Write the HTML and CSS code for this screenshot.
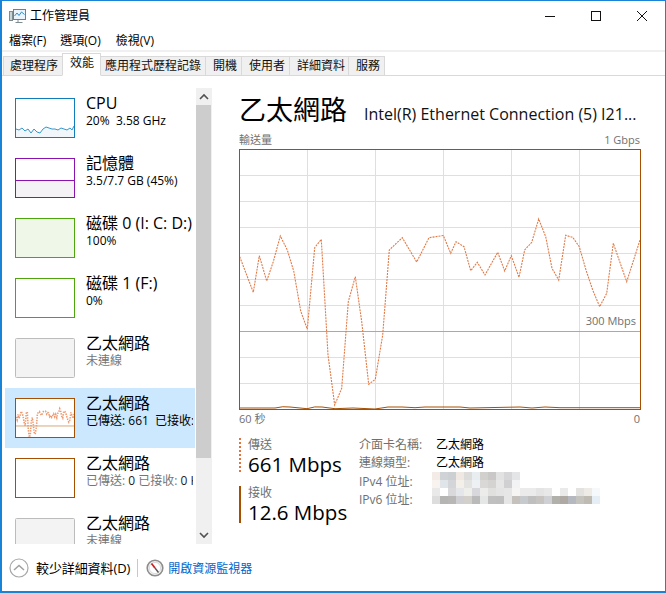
FILE: index.html
```html
<!DOCTYPE html>
<html lang="zh-Hant">
<head>
<meta charset="utf-8">
<title>工作管理員</title>
<link rel="stylesheet" href="styles.css">
</head>
<body>
<div class="window">
  <header class="titlebar">
    <svg class="app-icon" width="17" height="16" viewBox="0 0 17 16">
      <rect x="0.5" y="3.5" width="3" height="9" fill="#c9d3d6" stroke="#7d8c90"/>
      <rect x="4.5" y="1.5" width="12" height="10" fill="#eaf4fa" stroke="#6f8087"/>
      <path d="M5.5 8 L8 5 L10 7.5 L12.5 4 L15.5 6.5" fill="none" stroke="#2b8fc9"/>
      <path d="M9 12 V14 M6.5 14.5 H13.5" stroke="#7d8c90" fill="none"/>
    </svg>
    <span class="app-title">工作管理員</span>
    <div class="win-controls">
      <svg width="46" height="30" viewBox="0 0 46 30"><path d="M18 15.5 H28" stroke="#111"/></svg>
      <svg width="46" height="30" viewBox="0 0 46 30"><rect x="18.5" y="10.5" width="9" height="9" fill="none" stroke="#111"/></svg>
      <svg width="46" height="30" viewBox="0 0 46 30"><path d="M18 10 L28 20 M28 10 L18 20" stroke="#111" fill="none"/></svg>
    </div>
  </header>
  <nav class="menubar">
    <span>檔案(F)</span><span>選項(O)</span><span class="menu-view">檢視(V)</span>
  </nav>
  <div class="tabs">
    <span class="tab tab-first">處理程序</span>
    <span class="tab tab-active">效能</span>
    <span class="tab tab-tight">應用程式歷程記錄</span>
    <span class="tab">開機</span>
    <span class="tab">使用者</span>
    <span class="tab tab-details">詳細資料</span>
    <span class="tab">服務</span>
  </div>
  <main class="content">
    <aside class="side">
      <div class="list">
        <div class="item">
          <svg class="thumb" width="60" height="40" viewBox="0 0 60 40">
            <path class="cpu-fill" d="M1 31 L4 32 L7 30 L10 33 L13 31 L16 35 L19 31 L22 34 L25 35 L28 31 L31 29 L34 30 L37 31 L40 31 L43 32 L46 30 L49 31 L52 32 L55 30 L57 32 L59 28 V39 H1 Z"/>
            <path class="cpu-line" d="M1 31 L4 32 L7 30 L10 33 L13 31 L16 35 L19 31 L22 34 L25 35 L28 31 L31 29 L34 30 L37 31 L40 31 L43 32 L46 30 L49 31 L52 32 L55 30 L57 32 L59 28"/>
            <rect class="frame frame-cpu" x="0.5" y="0.5" width="59" height="39"/>
          </svg>
          <div class="item-text"><div class="item-title">CPU</div><div class="item-sub">20%&nbsp; 3.58 GHz</div></div>
        </div>
        <div class="item">
          <svg class="thumb" width="60" height="40" viewBox="0 0 60 40">
            <rect class="mem-fill" x="0" y="22" width="60" height="18"/>
            <path class="mem-line" d="M0 22.5 H60"/>
            <rect class="frame frame-mem" x="0.5" y="0.5" width="59" height="39"/>
          </svg>
          <div class="item-text"><div class="item-title">記憶體</div><div class="item-sub">3.5/7.7 GB (45%)</div></div>
        </div>
        <div class="item">
          <svg class="thumb" width="60" height="40" viewBox="0 0 60 40">
            <rect class="disk-fill" width="60" height="40"/>
            <rect class="frame frame-disk" x="0.5" y="0.5" width="59" height="39"/>
          </svg>
          <div class="item-text"><div class="item-title">磁碟 0 (I: C: D:)</div><div class="item-sub">100%</div></div>
        </div>
        <div class="item">
          <svg class="thumb" width="60" height="40" viewBox="0 0 60 40">
            <rect class="frame frame-disk" x="0.5" y="0.5" width="59" height="39"/>
          </svg>
          <div class="item-text"><div class="item-title">磁碟 1 (F:)</div><div class="item-sub">0%</div></div>
        </div>
        <div class="item">
          <svg class="thumb" width="60" height="40" viewBox="0 0 60 40">
            <rect class="frame frame-off" x="0.5" y="0.5" width="59" height="39" rx="1"/>
          </svg>
          <div class="item-text"><div class="item-title">乙太網路</div><div class="item-sub sub-muted">未連線</div></div>
        </div>
        <div class="item item-selected">
          <svg class="thumb" width="60" height="40" viewBox="239 149 402 261" preserveAspectRatio="none">
            <rect x="239" y="149" width="402" height="261" fill="#fff"/>
            <path class="thumb-mid" d="M239 331.5 H641"/>
            <use href="#series" class="thumb-series"/>
            <rect class="frame-eth-scaled" x="239" y="149" width="402" height="261"/>
          </svg>
          <div class="item-text"><div class="item-title">乙太網路</div><div class="item-sub">已傳送: 661&nbsp; 已接收: 12.6 Mbps</div></div>
        </div>
        <div class="item">
          <svg class="thumb" width="60" height="40" viewBox="0 0 60 40">
            <rect class="frame frame-eth" x="0.5" y="0.5" width="59" height="39"/>
          </svg>
          <div class="item-text"><div class="item-title">乙太網路</div><div class="item-sub sub-muted">已傳送: <b class="val">0</b> 已接收: <b class="val">0 Kbps</b></div></div>
        </div>
        <div class="item">
          <svg class="thumb" width="60" height="40" viewBox="0 0 60 40">
            <rect class="frame frame-off" x="0.5" y="0.5" width="59" height="39" rx="1"/>
          </svg>
          <div class="item-text"><div class="item-title">乙太網路</div><div class="item-sub sub-muted">未連線</div></div>
        </div>
      </div>
      <div class="scrollbar">
        <svg class="sb-btn" width="16" height="17" viewBox="0 0 16 17"><path d="M4 11 L8 7 L12 11" fill="none" stroke="#505050" stroke-width="1.6"/></svg>
        <div class="sb-thumb"></div>
        <div class="sb-rest"></div>
        <svg class="sb-btn" width="16" height="17" viewBox="0 0 16 17"><path d="M4 6 L8 10 L12 6" fill="none" stroke="#505050" stroke-width="1.6"/></svg>
      </div>
    </aside>
    <section class="main">
      <div class="heading">
        <h1 class="h-title">乙太網路</h1>
        <div class="h-sub">Intel(R) Ethernet Connection (5) I21...</div>
      </div>
      <div class="axis axis-top"><span>輸送量</span><span>1 Gbps</span></div>
      <div class="chart">
        <svg width="402" height="261" viewBox="239 149 402 261">
          <path class="grid" d="M239 175.5H640M239 201.5H640M239 227.5H640M239 253.5H640M239 279.5H640M239 305.5H640M239 357.5H640M239 383.5H640M307.5 149V409M375.5 149V409M443.5 149V409M511.5 149V409M579.5 149V409"/>
          <path class="midline" d="M239 331.5H640"/>
          <path id="series" class="series" d="M239.7 256.7 L253.3 292.3 L259.3 255.7 L266.7 281 L273.3 261.7 L280.3 236 L287.3 250 L293.7 271 L300.7 311 L307.3 329.3 L314.7 247.7 L321.3 239.3 L328 355 L334.7 405 L341.7 388.3 L348.3 301.7 L355.3 276.7 L361.7 321.7 L368.7 384.3 L375.3 379.3 L382.7 335 L389.3 250 L402.3 237.7 L416.7 262 L429 237.7 L443.3 235.5 L450.7 253.3 L456 241.7 L464 246.7 L470.7 270.7 L477.3 262.3 L485 275 L497.7 252.3 L504.7 271 L511.3 255.7 L519 277.3 L524.7 250 L531.7 242.3 L538.7 219 L545.7 236.7 L552 268.3 L558.7 280 L565.7 235.3 L572.7 237.3 L579.3 246.7 L586 270 L592.7 290 L599.7 306.7 L606.7 293.3 L613.3 243.3 L626.7 281.7 L640 240"/>
          <path class="recv" d="M240 408 H275 Q283 406 290 407 L307 408.7 Q315 406 322 407 L335 408.7 L353 408 L375 409 L388 407 H402 L415 407.7 L425 407 H460 L470 408 L520 407 L532 408 L545 407 L560 407.7 H640"/>
          <rect class="chart-frame" x="239.5" y="149.5" width="401" height="260"/>
        </svg>
        <span class="scale-label">300 Mbps</span>
      </div>
      <div class="axis axis-bottom"><span>60 秒</span><span>0</span></div>
      <div class="stats">
        <div class="rates">
          <div class="rate rate-send">
            <div class="rate-label">傳送</div>
            <div class="rate-value">661 Mbps</div>
          </div>
          <div class="rate rate-recv">
            <div class="rate-label">接收</div>
            <div class="rate-value">12.6 Mbps</div>
          </div>
        </div>
        <dl class="details">
          <dt>介面卡名稱:</dt><dd>乙太網路</dd>
          <dt>連線類型:</dt><dd>乙太網路</dd>
          <dt>IPv4 位址:</dt>
          <dd class="blur-cell">
            <svg width="168" height="32" viewBox="0 0 21 4" shape-rendering="crispEdges">
              <g>
                <rect x="0" y="0" width="1" height="1" fill="#f3ece6"/><rect x="1" y="0" width="1" height="1" fill="#cfd3d6"/><rect x="2" y="0" width="1" height="1" fill="#cdd0d3"/><rect x="3" y="0" width="1" height="1" fill="#f0e9e3"/><rect x="4" y="0" width="1" height="1" fill="#dcdcda"/><rect x="5" y="0" width="1" height="1" fill="#e8edf0"/><rect x="6" y="0" width="1" height="1" fill="#d2d0cd"/><rect x="7" y="0" width="1" height="1" fill="#c9c8c6"/><rect x="8" y="0" width="1" height="1" fill="#e2e2e2"/><rect x="9" y="0" width="1" height="1" fill="#d6d6d8"/><rect x="10" y="0" width="1" height="1" fill="#e4e5e7"/>
                <rect x="0" y="1" width="1" height="1" fill="#f8f3ee"/><rect x="1" y="1" width="1" height="1" fill="#e0e5e9"/><rect x="2" y="1" width="1" height="1" fill="#d3d5d8"/><rect x="3" y="1" width="1" height="1" fill="#f3efe9"/><rect x="4" y="1" width="1" height="1" fill="#e3e3e1"/><rect x="5" y="1" width="1" height="1" fill="#edf1f4"/><rect x="6" y="1" width="1" height="1" fill="#dad8d6"/><rect x="7" y="1" width="1" height="1" fill="#d4d3d1"/><rect x="8" y="1" width="1" height="1" fill="#e6e6e6"/><rect x="9" y="1" width="1" height="1" fill="#d0d0d2"/><rect x="10" y="1" width="1" height="1" fill="#f2f3f5"/>
                <rect x="0" y="2" width="1" height="1" fill="#e9e9e9"/><rect x="2" y="2" width="1" height="1" fill="#d9d8da"/><rect x="3" y="2" width="1" height="1" fill="#e4e6ea"/><rect x="4" y="2" width="1" height="1" fill="#eeeeea"/><rect x="5" y="2" width="1" height="1" fill="#d8d8dc"/><rect x="6" y="2" width="1" height="1" fill="#ececea"/><rect x="7" y="2" width="1" height="1" fill="#e0e0de"/><rect x="8" y="2" width="1" height="1" fill="#e4e4e4"/><rect x="9" y="2" width="1" height="1" fill="#e6e6e6"/><rect x="10" y="2" width="1" height="1" fill="#f6f5f3"/><rect x="11" y="2" width="1" height="1" fill="#ebebeb"/><rect x="12" y="2" width="1" height="1" fill="#ebebeb"/><rect x="13" y="2" width="1" height="1" fill="#e4e4e4"/><rect x="14" y="2" width="1" height="1" fill="#e8e8e8"/><rect x="16" y="2" width="1" height="1" fill="#eaeaea"/><rect x="18" y="2" width="1" height="1" fill="#e3e2e0"/><rect x="19" y="2" width="1" height="1" fill="#eeebe7"/><rect x="20" y="2" width="1" height="1" fill="#f6f9fc"/>
                <rect x="0" y="3" width="1" height="1" fill="#dddddd"/><rect x="1" y="3" width="1" height="1" fill="#b5b5b3"/><rect x="2" y="3" width="1" height="1" fill="#b8b7b5"/><rect x="3" y="3" width="1" height="1" fill="#cfcfd3"/><rect x="4" y="3" width="1" height="1" fill="#d3d0cb"/><rect x="5" y="3" width="1" height="1" fill="#bababa"/><rect x="6" y="3" width="1" height="1" fill="#e5e6e6"/><rect x="7" y="3" width="1" height="1" fill="#c0c0c0"/><rect x="8" y="3" width="1" height="1" fill="#bfbfbf"/><rect x="9" y="3" width="1" height="1" fill="#e6e6e6"/><rect x="10" y="3" width="1" height="1" fill="#c5c1bd"/><rect x="11" y="3" width="1" height="1" fill="#c7cacd"/><rect x="12" y="3" width="1" height="1" fill="#bfbfbf"/><rect x="13" y="3" width="1" height="1" fill="#c6c3c1"/><rect x="14" y="3" width="1" height="1" fill="#ced0d3"/><rect x="15" y="3" width="1" height="1" fill="#b2b0ab"/><rect x="16" y="3" width="1" height="1" fill="#aeaaa3"/><rect x="17" y="3" width="1" height="1" fill="#b6b8bf"/><rect x="18" y="3" width="1" height="1" fill="#c5c3be"/><rect x="19" y="3" width="1" height="1" fill="#bfbbb2"/><rect x="20" y="3" width="1" height="1" fill="#e6eef5"/>
              </g>
            </svg>
          </dd>
          <dt>IPv6 位址:</dt>
        </dl>
      </div>
    </section>
  </main>
  <footer class="footer">
    <span class="less">
      <svg width="20" height="20" viewBox="0 0 20 20"><circle cx="10" cy="10" r="9" fill="#fff" stroke="#a8a8a8" stroke-width="1.2"/><path d="M5 12 L10 7.5 L15 12" fill="none" stroke="#a0a0a0" stroke-width="1.5"/></svg>
      <span class="less-label">較少詳細資料(D)</span>
    </span>
    <span class="divider"></span>
    <span class="monitor">
      <svg width="18" height="18" viewBox="0 0 18 18"><circle cx="9" cy="9" r="7.8" fill="#efefef" stroke="#8c8c8c" stroke-width="1.6"/><circle cx="9" cy="9" r="5.6" fill="#fff" stroke="#c8c8c8" stroke-width="0.6"/><path d="M5.5 4.5 L9 9" stroke="#d02020" stroke-width="1.8"/><path d="M9 9 L12.5 13.5" stroke="#555" stroke-width="1.4"/></svg>
      <span class="link">開啟資源監視器</span>
    </span>
  </footer>
</div>
</body>
</html>
```
FILE: styles.css
```css
* { box-sizing: border-box; }
html, body { margin: 0; padding: 0; background: #fff; }
body {
  font-family: "Open Sans", "Noto Sans CJK TC", sans-serif;
  font-size: 12px;
  color: #000;
}
.window {
  width: 666px;
  height: 593px;
  display: flex;
  flex-direction: column;
  overflow: hidden;
  background: #fff;
  border: 1px solid #1883d7;
  border-left-width: 2px;
  border-bottom-width: 2px;
}
.titlebar { height: 30px; display: flex; align-items: center; padding-left: 7px; flex: none; }
.app-icon { margin-right: 4px; }
.app-title { font-size: 12px; line-height: 16px; }
.win-controls { margin-left: auto; display: flex; padding-right: 0; }
.win-controls svg { display: block; }
.menubar { height: 19px; display: flex; gap: 14px; padding-left: 7px; align-items: center; line-height: 16px; flex: none; }
.menu-view { margin-left: 1px; }
.tabs {
  height: 26px;
  flex: none;
  display: flex;
  align-items: flex-end;
  padding-left: 1px;
  border-top: 2px solid #f0f0f0;
  border-bottom: 1px solid #d9d9d9;
}
.tab {
  height: 20px;
  margin-bottom: -1px;
  padding: 0 4px 0 7px;
  line-height: 17px;
  background: #f0f0f0;
  border: 1px solid #d9d9d9;
  margin-left: -1px;
  color: #111;
  white-space: nowrap;
}
.tabs .tab-first { margin-left: 0; padding-left: 6px; }
.tabs .tab-tight { padding-left: 4px; }
.tabs .tab-details { padding-right: 3px; }
.tabs .tab-active { height: 23px; padding: 0 6px 2px 7px; background: #fff; border-bottom-color: #fff; position: relative; z-index: 1; }
.content { flex: 1; display: flex; min-height: 0; padding-top: 12px; }
.side { display: flex; width: 210px; flex: none; padding-left: 3px; height: 456px; }
.list { width: 191px; height: 456px; overflow: hidden; flex: none; }
.item { height: 60px; width: 190px; display: flex; padding: 10px 0 0 10px; overflow: hidden; }
.item-selected { background: #cce8ff; }
.thumb { flex: none; display: block; }
.item-text { margin-left: 11px; min-width: 0; flex: 1; white-space: nowrap; overflow: hidden; margin-right: 2px; margin-top: -5px; }
.item-title { font-size: 16px; line-height: 20px; }
.item-sub { font-size: 12px; line-height: 16px; letter-spacing: 0; }
.sub-muted { color: #767676; }
.val { font-weight: 400; color: #222; }
.frame { fill: none; }
.frame-cpu { stroke: #117dbb; }
.frame-mem { stroke: #8b12ae; }
.frame-disk { stroke: #4da60c; }
.frame-off { stroke: #bcbcbc; fill: #f3f3f3; }
.frame-eth { stroke: #a74f01; }
.frame-eth-scaled { fill: none; stroke: #a74f01; stroke-width: 2px; vector-effect: non-scaling-stroke; }
.cpu-fill { fill: #f1f6fa; }
.cpu-line { fill: none; stroke: #3a97cc; stroke-width: 1; }
.mem-fill { fill: #f4f2f4; }
.mem-line { stroke: #8b12ae; fill: none; }
.disk-fill { fill: #eff7e9; }
.thumb-mid { stroke: #d9a878; stroke-width: 1px; vector-effect: non-scaling-stroke; }
.thumb-series { --sw: 1.6; --dash: 1.4 1.2; --col: #ee9a70; }
.scrollbar { width: 16px; height: 456px; flex: none; background: #f0f0f0; display: flex; flex-direction: column; }
.sb-btn { display: block; flex: none; }
.sb-thumb { height: 353px; width: 15px; background: #cdcdcd; flex: none; }
.sb-rest { flex: 1; }
.main { width: 402px; margin-left: 27px; flex: none; }
.heading { display: flex; align-items: flex-end; height: 37px; margin-top: 3px; }
.h-title { margin: 0; font-size: 27px; font-weight: 400; line-height: 36px; }
.h-sub { margin-left: 17px; font-size: 16px; line-height: 24px; white-space: nowrap; margin-bottom: 2px; color: #111; }
.axis { display: flex; justify-content: space-between; font-size: 11px; color: #707070; line-height: 14px; padding-right: 1px; }
.axis-top { margin-top: 5px; height: 16px; }
.axis-bottom { margin-top: 2px; height: 14px; }
.chart { position: relative; height: 261px; width: 402px; }
.chart svg { display: block; }
.scale-label { position: absolute; right: 5px; top: 165px; font-size: 11px; line-height: 14px; color: #707070; }
.grid { stroke: #eedccb; fill: none; }
.midline { stroke: #cfa078; fill: none; }
.series { fill: none; stroke: var(--col, #e27a47); stroke-width: var(--sw, 1.1); stroke-dasharray: var(--dash, 2 1); vector-effect: non-scaling-stroke; }
.recv { fill: none; stroke: #a74f01; stroke-width: 1; }
.chart-frame { fill: none; stroke: #a74f01; }
.stats { display: flex; margin-top: 12px; }
.rates { width: 120px; flex: none; }
.rate { padding-left: 7px; border-left: 2px solid #a74f01; }
.rate-send { border-left: 2px dotted #e0733e; height: 34px; margin-bottom: 15px; }
.rate-recv { height: 37px; }
.rate-recv .rate-label { margin-top: -1px; }
.rate-label { font-size: 12px; line-height: 13px; color: #707070; }
.rate-value { font-size: 20.5px; line-height: 27px; white-space: nowrap; }
.details { margin: -2px 0 0; display: grid; grid-template-columns: 77px auto; grid-template-rows: 18px 18px 19px 18px; align-items: center; line-height: 18px; }
.details dt { color: #707070; grid-column: 1; }
.details dd { margin: 0; grid-column: 2; }
.details .blur-cell { grid-row: 3 / span 2; align-self: start; margin: 0 0 0 -4px; }
.blur-cell svg { display: block; }
.footer { height: 47px; flex: none; display: flex; align-items: center; padding-left: 7px; }
.less { display: flex; align-items: center; gap: 7px; }
.less-label { font-size: 13px; letter-spacing: -0.1px; }
.divider { width: 1px; height: 18px; background: #c8c8c8; margin: 0 8px 0 7px; }
.monitor { display: flex; align-items: center; gap: 4px; }
.link { color: #0066cc; }
```
